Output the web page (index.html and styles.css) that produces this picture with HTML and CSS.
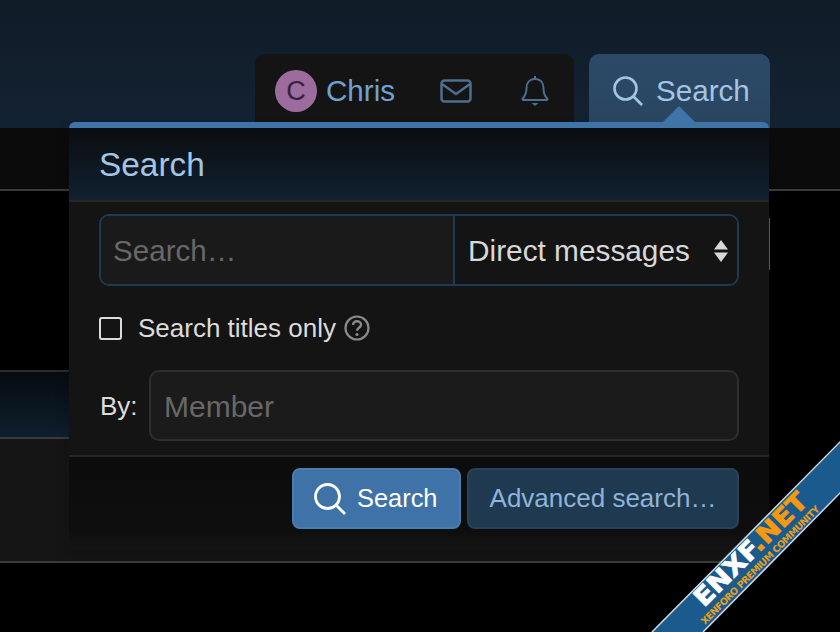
FILE: index.html
```html
<!DOCTYPE html>
<html lang="en">
<head>
<meta charset="utf-8">
<title>Search</title>
<link rel="stylesheet" href="styles.css">
</head>
<body>
<header class="top">
  <nav class="nav">
    <div class="user-box">
      <a class="user-link"><span class="avatar">C</span><span class="user-name">Chris</span></a>
      <a class="icon-link icon-mail">
        <svg width="32" height="24" viewBox="0 0 32 24" fill="none" stroke="#4c6f91" stroke-width="2.5"><rect x="1.5" y="1.5" width="29" height="21" rx="3"/><path d="M2 5l14 10L30 5"/></svg>
      </a>
      <a class="icon-link icon-bell">
        <svg width="28" height="32" viewBox="0 0 28 32" fill="none" stroke="#4c6f91" stroke-width="2"><path d="M14 1v3M14 4c-5.500 0-8.500 4-8.500 9 0 6-1.500 8-3.700 10.500-.6.700-.2 1.500.7 1.500h23c.9 0 1.300-.8.700-1.500C23.500 21 22.500 19 22.500 13c0-5-3-9-8.500-9z"/><path d="M10.500 28h7l-3.500 3z" fill="#4c6f91" stroke="none"/></svg>
      </a>
    </div>
    <a class="search-tab">
      <svg class="search-icon" width="30" height="30" viewBox="0 0 30 30" fill="none" stroke="#a5c5e4" stroke-width="2.600"><circle cx="12.500" cy="12.500" r="11"/><path d="M20.500 20.500L29 29"/></svg>
      <span>Search</span>
    </a>
  </nav>
</header>
<div class="subnav"></div>
<main class="content">
  <div class="block-head"></div>
  <div class="block-body"></div>
</main>
<span class="edge-strip"></span>

<section class="menu">
  <span class="menu-arrow"></span>
  <h3 class="menu-title">Search</h3>
  <div class="menu-body">
    <div class="combo">
      <input class="combo-input" type="text" placeholder="Search…">
      <div class="combo-select">
        <span>Direct messages</span>
        <svg width="14" height="22" viewBox="0 0 14 22" fill="#d8d8d8"><path d="M7 0l7 9.500H0zM7 22L0 12.500h14z"/></svg>
      </div>
    </div>
    <label class="check-row">
      <span class="check-box"></span>
      <span>Search titles only</span>
      <svg width="26" height="26" viewBox="0 0 26 26" fill="none" stroke="#8a8a8a" stroke-width="2.200"><circle cx="13" cy="13" r="11.500"/><path d="M9 10c0-2.500 2-3.800 4-3.800s4 1.300 4 3.600c0 3-4 3-4 6" stroke-width="2.400"/><circle cx="13" cy="19.500" r="1.600" fill="#8a8a8a" stroke="none"/></svg>
    </label>
    <div class="by-row">
      <span class="by-label">By:</span>
      <input class="by-input" type="text" placeholder="Member">
    </div>
  </div>
  <div class="menu-foot">
    <a class="btn btn-primary">
      <svg width="32" height="32" viewBox="0 0 32 32" fill="none" stroke="#fff" stroke-width="2.800"><circle cx="13.500" cy="13.500" r="12"/><path d="M22 22l9 9"/></svg>
      <span>Search</span>
    </a>
    <a class="btn btn-secondary">Advanced search…</a>
  </div>
</section>

<svg class="ribbon" width="190" height="192" viewBox="0 0 190 192">
  <polygon points="1,192 190,2 190,52 52,192" fill="#1b5a8d"/>
  <path d="M1 192L190 1" stroke="#cfd8df" stroke-width="1.500"/>
  <path d="M52 192L190 52" stroke="#cfd8df" stroke-width="1.500"/>
  <text class="ribbon-main" transform="translate(53,168) rotate(-45)" textLength="149" lengthAdjust="spacingAndGlyphs"><tspan fill="#fff" stroke="#fff">ENXF</tspan><tspan fill="#f59a10" stroke="#f59a10">.NET</tspan></text>
  <text class="ribbon-sub" transform="translate(54,185) rotate(-45)" textLength="163">XENFORO PREMIUM COMMUNITY</text>
</svg>
</body>
</html>
```
FILE: styles.css
```css
* { box-sizing: border-box; }
html, body { margin: 0; padding: 0; }
body {
  position: relative;
  width: 840px;
  height: 632px;
  overflow: hidden;
  background: #000;
  font-family: "Liberation Sans", Arial, sans-serif;
}
.top {
  height: 128px;
  background: linear-gradient(#101b27, #132232);
  padding-top: 54px;
}
.nav {
  display: flex;
  justify-content: flex-end;
  gap: 15px;
  padding-right: 70px;
  height: 74px;
}
.user-box {
  display: flex;
  align-items: center;
  width: 319px;
  padding: 0 0 0 20px;
  background: #141414;
  border-radius: 10px 10px 0 0;
}
.user-link { display: flex; align-items: center; gap: 9px; width: 165px; }
.avatar {
  width: 42px;
  height: 42px;
  border-radius: 50%;
  background: #9c6c9e;
  color: #38203c;
  font-size: 27px;
  line-height: 42px;
  text-align: center;
}
.user-name { color: #6ea3d1; font-size: 29.600px; }
.icon-link { display: flex; align-items: center; }
.icon-mail { width: 81px; }
.search-tab {
  display: flex;
  align-items: center;
  gap: 13px;
  width: 181px;
  padding-left: 24px;
  background: linear-gradient(#2c4a67, #294560);
  border-radius: 10px 10px 0 0;
  color: #a5c5e4;
  font-size: 29.600px;
}
.subnav {
  height: 63px;
  background: #0b0b0b;
  border-bottom: 2px solid #3a3a3a;
}
.content { width: 769px; padding-top: 179px; }
.block-head {
  height: 69px;
  border-top: 2px solid #2b2b2b;
  border-bottom: 2px solid #3a3a3a;
  background: linear-gradient(#060b10, #0f1f2e);
}
.block-body {
  height: 124px;
  background: #151515;
  border-bottom: 2px solid #3a3a3a;
}
.edge-strip {
  position: absolute;
  left: 769px;
  top: 218px;
  width: 1px;
  height: 52px;
  background: #7d5526;
}
.menu {
  position: absolute;
  left: 69px;
  top: 122px;
  width: 700px;
  height: 428px;
  border-top: 6px solid #3f74a8;
  border-radius: 6px 6px 0 0;
  background: #141414;
  box-shadow: -4px 6px 12px rgba(0, 0, 0, 0.12);
}
.menu-arrow {
  position: absolute;
  left: 594px;
  top: -22px;
  width: 0;
  height: 0;
  border: 16px solid transparent;
  border-top: 0;
  border-bottom: 16px solid #3f74a8;
}
.menu-title {
  margin: 0;
  height: 74px;
  padding: 18px 0 0 30px;
  background: linear-gradient(#0a0d10, #112130);
  border-bottom: 2px solid #262626;
  color: #a5c5e4;
  font-size: 33.400px;
  font-weight: 400;
  line-height: 38px;
}
.menu-body {
  height: 255px;
  padding: 12px 30px 0 30px;
  border-bottom: 2px solid #262626;
}
.combo {
  display: flex;
  height: 72px;
  border: 2px solid #1f3a54;
  border-radius: 10px;
  overflow: hidden;
}
.combo-input {
  width: 354px;
  height: 100%;
  padding: 2px 12px 0;
  border: 0;
  border-right: 2px solid #1f3a54;
  background: #1a1a1a;
  font: 29.600px "Liberation Sans", Arial, sans-serif;
  outline: none;
}
.combo-input::placeholder, .by-input::placeholder { color: #686868; opacity: 1; }
.combo-select {
  flex: 1;
  display: flex;
  align-items: center;
  justify-content: space-between;
  padding: 2px 9px 0 13px;
  background: #141414;
  color: #d8d8d8;
  font-size: 29.800px;
}
.check-row {
  display: flex;
  align-items: center;
  gap: 8px;
  height: 26px;
  margin-top: 29px;
  color: #dcdcdc;
  font-size: 26px;
}
.check-box {
  width: 23px;
  height: 23px;
  margin-right: 8px;
  border: 2px solid #dcdcdc;
  border-radius: 3px;
}
.by-row { display: flex; align-items: center; gap: 12px; margin-top: 29px; }
.by-label { color: #dcdcdc; font-size: 26px; width: 38px; padding: 2px 0 0 1px; }
.by-input {
  width: 590px;
  height: 71px;
  padding: 2px 13px 0;
  border: 2px solid #2e2e2e;
  border-radius: 10px;
  background: #1b1b1b;
  font: 30px "Liberation Sans", Arial, sans-serif;
  outline: none;
}
.menu-foot {
  display: flex;
  justify-content: flex-end;
  gap: 6px;
  height: 91px;
  padding: 11px 30px 0 0;
  background: linear-gradient(#0c0c0c, #0e0e0e 80%, #141414);
}
.btn {
  display: flex;
  align-items: center;
  height: 61px;
  border-radius: 8px;
  font-size: 26px;
}
.btn-primary {
  width: 169px;
  gap: 11px;
  padding-left: 20px;
  background: #3f72a6;
  border: 2px solid #4a7cae;
  color: #fff;
  font-size: 25.400px;
}
.btn-secondary {
  width: 272px;
  justify-content: center;
  background: #1f3950;
  border: 2px solid #274259;
  color: #8fb3d9;
}
.ribbon {
  position: absolute;
  left: 651px;
  top: 440px;
}
.ribbon-main {
  font-family: "DejaVu Sans", sans-serif;
  font-size: 25px;
  font-weight: 700;
  stroke-width: 0.8px;
}
.ribbon-sub {
  font-family: "DejaVu Sans", sans-serif;
  font-size: 9.500px;
  font-weight: 700;
  fill: #e9a020;
}
```
